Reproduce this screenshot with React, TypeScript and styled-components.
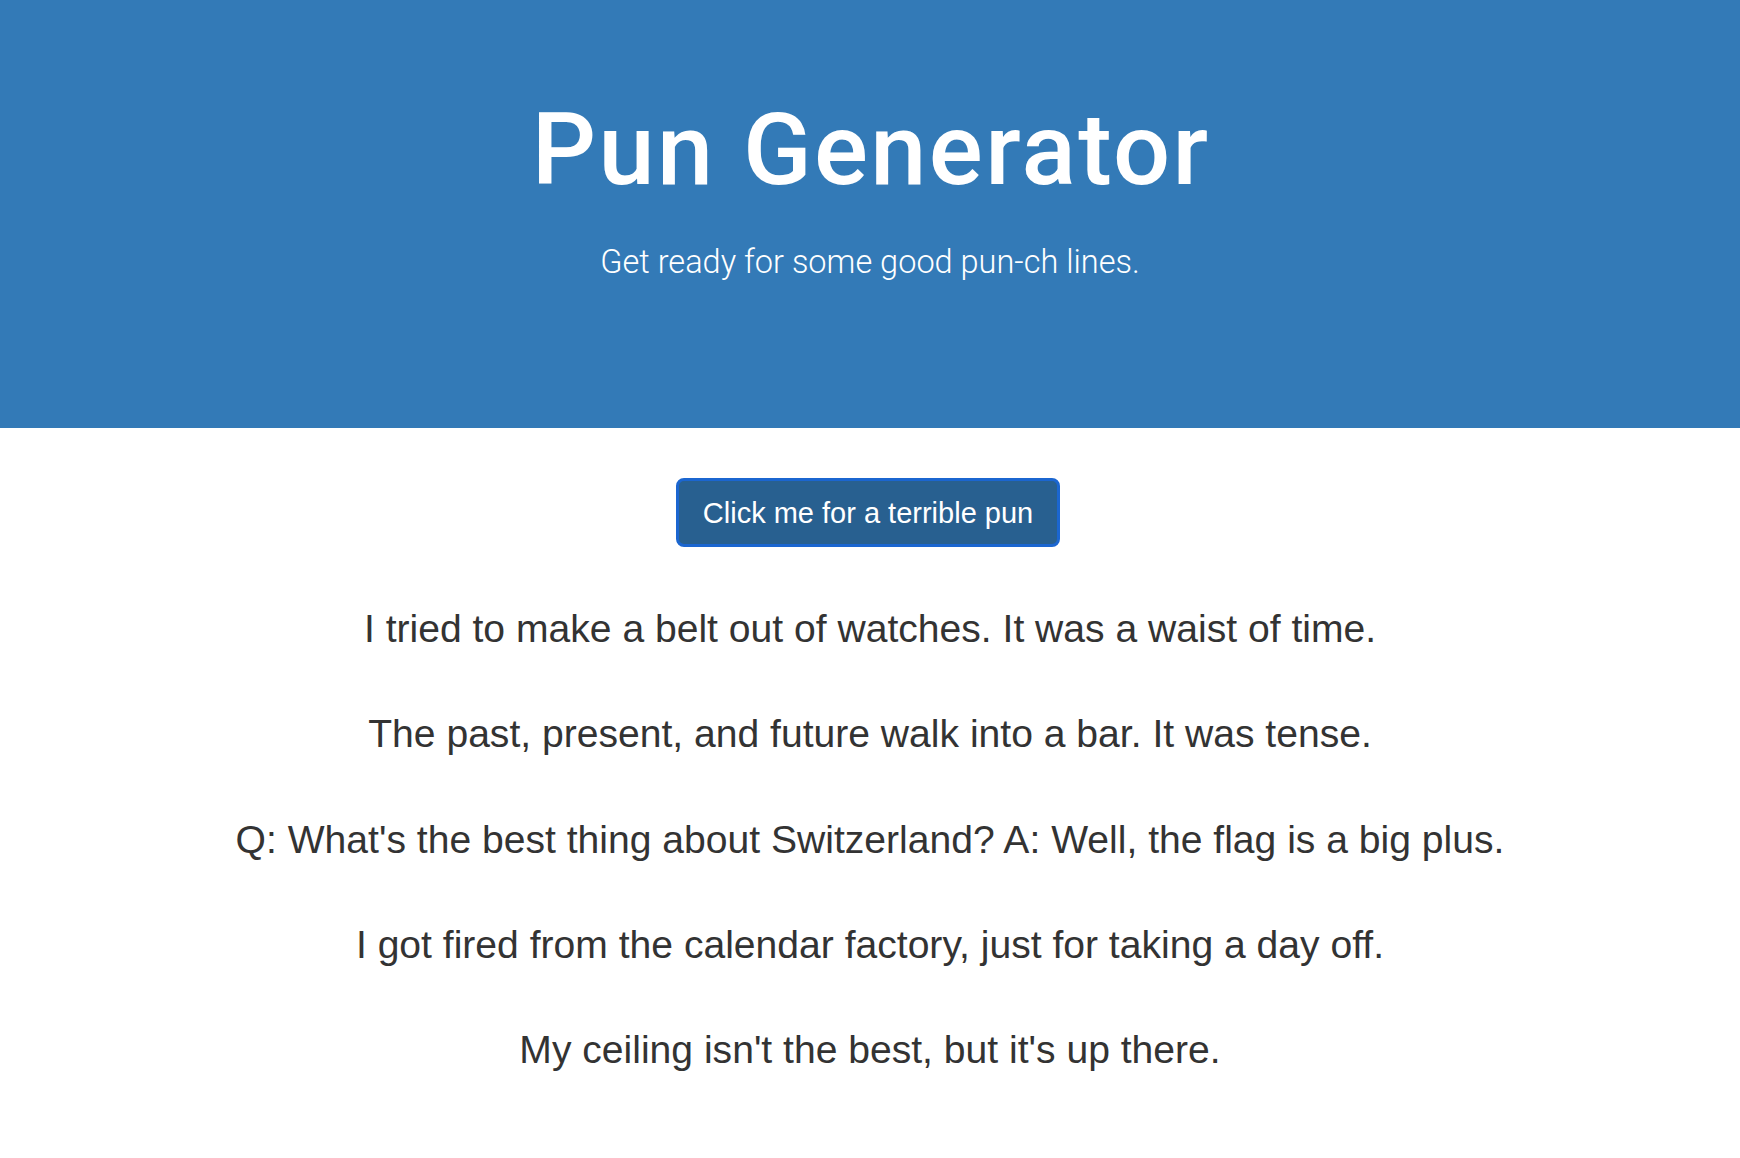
import React from "react";
import styled, { createGlobalStyle } from "styled-components";

const GlobalStyle = createGlobalStyle`
  html, body {
    margin: 0;
    padding: 0;
    background: #ffffff;
  }
  body {
    font-family: "Liberation Sans", Arial, Helvetica, sans-serif;
    color: #333333;
  }
  * { box-sizing: border-box; }
`;

const Jumbotron = styled.header`
  height: 428px;
  background: #337ab7;
  color: #ffffff;
  display: flex;
  flex-direction: column;
  align-items: center;
  padding-top: 95px;
`;

const Title = styled.h1`
  margin: 0;
  font-family: "Roboto", "Liberation Sans", Arial, sans-serif;
  font-weight: 500;
  font-size: 100.8px;
  line-height: 1.1;
  letter-spacing: 2.4px;
  padding-left: 2.4px;
`;

const Lead = styled.p`
  margin: 34px 0 0;
  font-family: "Roboto", "Liberation Sans", Arial, sans-serif;
  font-weight: 300;
  font-size: 32.5px;
  line-height: 44.8px;
`;

const Main = styled.main`
  display: flex;
  flex-direction: column;
  align-items: center;
  padding: 50px 0 60px;
`;

const PunButton = styled.button`
  height: 69px;
  padding: 2px 24px 0;
  display: flex;
  align-items: center;
  justify-content: center;
  background: #286090;
  color: #ffffff;
  border: 3px solid #1b66d0;
  border-radius: 8px;
  font-family: "Liberation Sans", Arial, sans-serif;
  font-size: 29px;
  line-height: 1;
  cursor: pointer;
  margin-right: 4px;
`;

const PunList = styled.div`
  margin-top: 61px;
  display: flex;
  flex-direction: column;
  align-items: center;
  gap: 63px;
`;

const Pun = styled.p`
  margin: 0;
  font-size: 39.1px;
  line-height: 42.3px;
  color: #333333;
  text-align: center;
`;

const puns = [
  "I tried to make a belt out of watches. It was a waist of time.",
  "The past, present, and future walk into a bar. It was tense.",
  "Q: What's the best thing about Switzerland? A: Well, the flag is a big plus.",
  "I got fired from the calendar factory, just for taking a day off.",
  "My ceiling isn't the best, but it's up there.",
];

export default function App() {
  return (
    <>
      <GlobalStyle />
      <Jumbotron>
        <Title>Pun Generator</Title>
        <Lead>Get ready for some good pun-ch lines.</Lead>
      </Jumbotron>
      <Main>
        <PunButton type="button">Click me for a terrible pun</PunButton>
        <PunList>
          {puns.map((p) => (
            <Pun key={p}>{p}</Pun>
          ))}
        </PunList>
      </Main>
    </>
  );
}
